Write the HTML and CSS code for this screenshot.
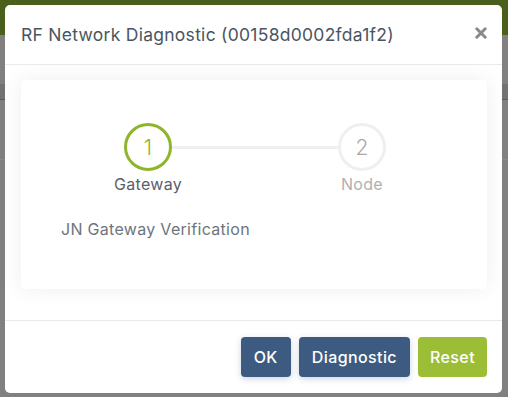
FILE: index.html
```html
<!DOCTYPE html>
<html lang="en">
<head>
<meta charset="utf-8">
<title>RF Network Diagnostic</title>
<link rel="stylesheet" href="styles.css">
</head>
<body>
<div class="page">
  <div class="modal">
    <div class="modal-header">
      <h4 class="modal-title">RF Network Diagnostic (00158d0002fda1f2)</h4>
      <button class="close" type="button" aria-label="Close">
        <svg width="12" height="12" viewBox="0 0 12 12"><path d="M1.8 1.8 L10.2 10.2 M10.2 1.8 L1.8 10.2" stroke="#8a8a8a" stroke-width="3" stroke-linecap="round" fill="none"/></svg>
      </button>
    </div>
    <div class="modal-body">
      <div class="card">
        <div class="stepper">
          <div class="step-circle active">1</div>
          <div class="connector"></div>
          <div class="step-circle">2</div>
          <div class="step-label active">Gateway</div>
          <div class="spacer"></div>
          <div class="step-label">Node</div>
        </div>
        <p class="step-desc">JN Gateway Verification</p>
      </div>
    </div>
    <div class="modal-footer">
      <button class="btn btn-blue" type="button">OK</button>
      <button class="btn btn-blue" type="button">Diagnostic</button>
      <button class="btn btn-green" type="button">Reset</button>
    </div>
  </div>
</div>
</body>
</html>
```
FILE: styles.css
```css
* { box-sizing: border-box; }
html, body { margin: 0; padding: 0; }
body {
  width: 508px;
  height: 397px;
  overflow: hidden;
  font-family: Inter, "Open Sans", sans-serif;
  background:
    linear-gradient(#4b5f1c, #4b5f1c) 0 0 / 100% 35px no-repeat,
    linear-gradient(#5c5c5c, #5c5c5c) 0 99px / 100% 1px no-repeat,
    linear-gradient(#727272, #727272) 0 84px / 100% 15px no-repeat,
    linear-gradient(#8a8a8a, #8a8a8a) 0 159px / 100% 1px no-repeat,
    #808080;
}
.page { padding: 5px 6px 4px 5px; }
.modal {
  width: 497px;
  height: 388px;
  background: #fff;
  border-radius: 5px;
  display: flex;
  flex-direction: column;
  overflow: hidden;
}
.modal-header {
  height: 60px;
  flex: none;
  border-bottom: 1px solid #e7ebef;
  display: flex;
  align-items: center;
  justify-content: space-between;
  padding: 0 15px 0 16px;
}
.modal-title {
  margin: 0;
  font-size: 17.5px;
  font-weight: 400;
  color: #4a5561;
  letter-spacing: 0.27px;
}
.close {
  border: 0;
  background: none;
  padding: 0;
  display: flex;
  margin-top: -4px;
  cursor: pointer;
}
.modal-body {
  flex: none;
  height: 256px;
  padding: 15px 15px 0 16px;
  border-bottom: 1px solid #e7ebef;
}
.card {
  height: 209px;
  background: #fff;
  border-radius: 4px;
  box-shadow: 0 0 22px rgba(0, 0, 0, 0.07);
  padding: 43px 101px 0 103px;
}
.stepper {
  display: grid;
  grid-template-columns: 48px 1fr 48px;
  grid-template-rows: 48px auto;
  align-items: center;
}
.step-circle {
  width: 48px;
  height: 48px;
  border-radius: 50%;
  border: 3px solid #efefef;
  display: flex;
  align-items: center;
  justify-content: center;
  font-size: 21px;
  font-weight: 300;
  color: #a8a8a8;
  background: #fff;
}
.step-circle.active {
  border-color: #8fb52c;
  color: #8fb52c;
}
.connector {
  height: 3px;
  background: #f0f0f0;
}
.step-label {
  width: 100px;
  margin: 2px -26px 0;
  text-align: center;
  font-size: 16px;
  line-height: 22px;
  letter-spacing: 0.3px;
  color: #b0b0b0;
}
.step-label.active { color: #5a6069; }
.step-desc {
  margin: 23px 0 0 -63px;
  font-size: 16px;
  line-height: 22px;
  letter-spacing: 0.3px;
  color: #6e757e;
}
.modal-footer {
  flex: 1;
  display: flex;
  justify-content: flex-end;
  align-items: flex-start;
  gap: 8px;
  padding: 16px 15px 0 0;
}
.btn {
  height: 40px;
  border: 0;
  border-radius: 4px;
  padding: 0 13px;
  font-family: inherit;
  font-size: 16px;
  font-weight: 500;
  letter-spacing: 0.4px;
  color: #fff;
  cursor: pointer;
}
.btn-green { padding: 0 12px; }
.btn-blue {
  background: #3d5b81;
  box-shadow: 0 2px 6px rgba(61, 91, 129, 0.25);
}
.btn-green { background: #9bbe36; }
```
